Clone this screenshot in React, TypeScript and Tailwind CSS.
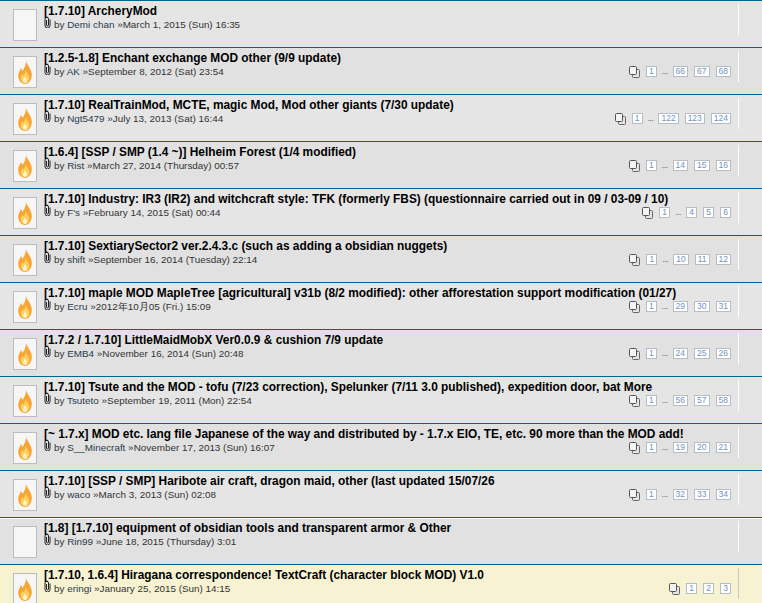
const rows: { t: string; by: string; d: string; p: string[]; x?: boolean; y?: boolean }[] = [
  { t: "[1.7.10] ArcheryMod", by: "Demi chan", d: "March 1, 2015 (Sun) 16:35", p: [], x: true },
  { t: "[1.2.5-1.8] Enchant exchange MOD other (9/9 update)", by: "AK", d: "September 8, 2012 (Sat) 23:54", p: ["66", "67", "68"] },
  { t: "[1.7.10] RealTrainMod, MCTE, magic Mod, Mod other giants (7/30 update)", by: "Ngt5479", d: "July 13, 2013 (Sat) 16:44", p: ["122", "123", "124"] },
  { t: "[1.6.4] [SSP / SMP (1.4 ~)] Helheim Forest (1/4 modified)", by: "Rist", d: "March 27, 2014 (Thursday) 00:57", p: ["14", "15", "16"] },
  { t: "[1.7.10] Industry: IR3 (IR2) and witchcraft style: TFK (formerly FBS) (questionnaire carried out in 09 / 03-09 / 10)", by: "F's", d: "February 14, 2015 (Sat) 00:44", p: ["4", "5", "6"] },
  { t: "[1.7.10] SextiarySector2 ver.2.4.3.c (such as adding a obsidian nuggets)", by: "shift", d: "September 16, 2014 (Tuesday) 22:14", p: ["10", "11", "12"] },
  { t: "[1.7.10] maple MOD MapleTree [agricultural] v31b (8/2 modified): other afforestation support modification (01/27)", by: "Ecru", d: "2012年10月05 (Fri.) 15:09", p: ["29", "30", "31"] },
  { t: "[1.7.2 / 1.7.10] LittleMaidMobX Ver0.0.9 & cushion 7/9 update", by: "EMB4", d: "November 16, 2014 (Sun) 20:48", p: ["24", "25", "26"] },
  { t: "[1.7.10] Tsute and the MOD - tofu (7/23 correction), Spelunker (7/11 3.0 published), expedition door, bat More", by: "Tsuteto", d: "September 19, 2011 (Mon) 22:54", p: ["56", "57", "58"] },
  { t: "[~ 1.7.x] MOD etc. lang file Japanese of the way and distributed by - 1.7.x EIO, TE, etc. 90 more than the MOD add!", by: "S__Minecraft", d: "November 17, 2013 (Sun) 16:07", p: ["19", "20", "21"] },
  { t: "[1.7.10] [SSP / SMP] Haribote air craft, dragon maid, other (last updated 15/07/26", by: "waco", d: "March 3, 2013 (Sun) 02:08", p: ["32", "33", "34"] },
  { t: "[1.8] [1.7.10] equipment of obsidian tools and transparent armor & Other", by: "Rin99", d: "June 18, 2015 (Thursday) 3:01", p: [], x: true },
  { t: "[1.7.10, 1.6.4] Hiragana correspondence! TextCraft (character block MOD) V1.0", by: "eringi", d: "January 25, 2015 (Sun) 14:15", p: ["1", "2", "3"], y: true },
];

function Flame() {
  return (
    <svg width="14" height="23" viewBox="0 0 14 23" className="block">
      <path d="M8 0c.5 3.500 5.500 7.500 5.800 13.500.2 5-2.800 9.500-6.800 9.500S.2 19 .2 14.500C.2 11.500 2 10 3 7c.8 1 1.200 2 1.300 3C6.500 7.500 8 3.500 8 0z" fill="#f9a534" />
      <path d="M7.500 8.500c.4 2.500 3.800 5 3.800 8.500 0 2.800-2 5-4.300 5s-4.300-2-4.300-4.800c0-1.800 1.200-3 1.700-4.500.4.800.8 1.300 1.200 2C6.700 13 7.500 11 7.500 8.500z" fill="#fdd25c" />
      <path d="M7 15c.4 1.800 2 2.800 2 4.500S8 22 7 22s-2-1-2-2.500S6.600 16.800 7 15z" fill="#fff4cf" />
    </svg>
  );
}

function Clip() {
  return (
    <svg width="7" height="11" viewBox="0 0 7 11" fill="none" stroke="#222" strokeWidth="1" className="block">
      <path d="M2.500 3v5a1 1 0 0 0 2 0V2A1.500 1.500 0 0 0 1 2v6.500a2.500 2.500 0 0 0 5 0V2.500" />
    </svg>
  );
}

function PagesIcon() {
  return (
    <svg width="11" height="12" viewBox="0 0 11 12" className="mt-[1px] mr-[1px] block">
      <rect x="3.500" y="3.500" width="7" height="8" rx="1" fill="#e4e4e4" stroke="#666" />
      <rect x="0.500" y="0.500" width="7" height="8" rx="1" fill="#f4f4f4" stroke="#555" />
    </svg>
  );
}

function Page({ n }: { n: string }) {
  return (
    <span className="flex h-[11px] min-w-[11px] items-center justify-center border border-[#b8bcc4] bg-white px-[2px] text-[8.500px] leading-none text-[#6f94c0]">
      {n}
    </span>
  );
}

export default function App() {
  return (
    <div className="h-[603px] w-[762px] overflow-hidden bg-white font-['Liberation_Sans',Arial,sans-serif]">
      {rows.map((r, i) => (
        <div
          key={i}
          className={`relative flex h-[47px] border-t-[1.5px] border-[#00608f] ${r.y ? "bg-[#f6f2d2]" : i % 2 ? "bg-[#e1e1e1]" : "bg-[#e5e5e5]"} ${i === 11 ? "shadow-[inset_0_1px_0_#ffffff]" : ""}`}
        >
          <div className="flex w-[44px] shrink-0 items-start pl-[13px] pt-[8px]">
            <div className="flex h-[32px] w-[24px] items-center justify-center border border-[#bcbcbc] bg-[#f6f6f6]">
              {!r.x && <Flame />}
            </div>
          </div>
          <div className="min-w-0 flex-1 pt-[2px]">
            <div className="whitespace-nowrap text-[11.88px] leading-[16px] font-bold text-black">{r.t}</div>
            <div className="flex items-start">
              <span className="mr-[3px] -mt-[2px]">
                <Clip />
              </span>
              <span className="whitespace-nowrap text-[9.88px] leading-[11px] text-[#333]">
                <span>by </span>
                <span className="text-[#2b3a4a]">{r.by}</span> »{r.d}
              </span>
            </div>
          </div>
          <div className="flex w-[24px] shrink-0 items-start justify-start pt-[3px]">
            <div className={`h-[31px] w-px ${r.y ? "bg-[#c8c8c8]" : "bg-white"}`} />
          </div>
          {r.p.length > 0 && (
            <div className="absolute right-[31px] top-[17px] flex items-center gap-[5px]">
              <PagesIcon />
              {i !== 12 && <Page n="1" />}
              {i !== 12 && <span className="text-[8px] leading-none tracking-[-0.3px] text-[#333]">...</span>}
              <div className="flex items-center gap-[6px]">
                {r.p.map((n) => (
                  <Page key={n} n={n} />
                ))}
              </div>
            </div>
          )}
        </div>
      ))}
    </div>
  );
}
